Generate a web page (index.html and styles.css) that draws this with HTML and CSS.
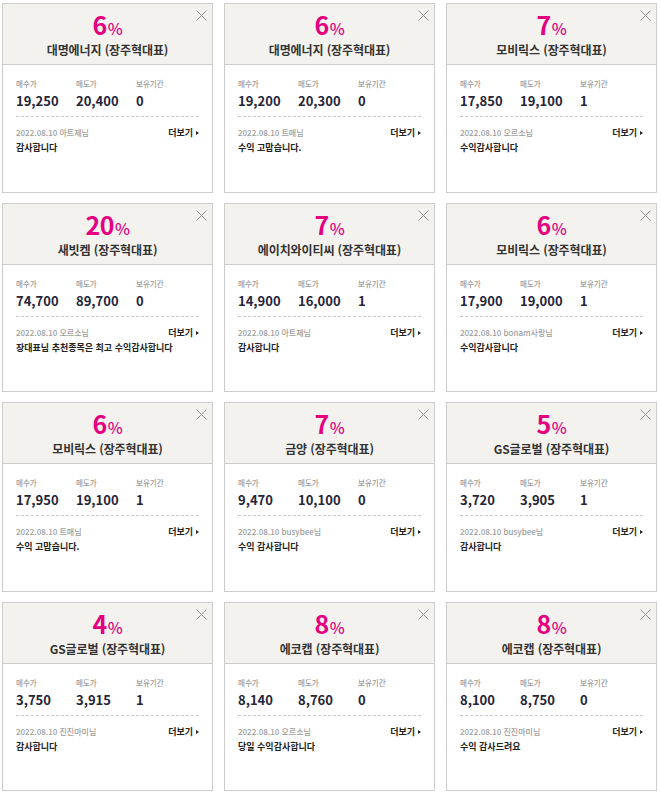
FILE: index.html
```html
<!DOCTYPE html>
<html lang="ko">
<head>
<meta charset="utf-8">
<title>수익 후기</title>
<link rel="stylesheet" href="styles.css">
</head>
<body>
<div class="grid">

<div class="card">
  <svg class="close" viewBox="0 0 11 11" width="11" height="11"><path d="M0.5 0.5L10.5 10.5M10.5 0.5L0.5 10.5"/></svg>
  <div class="head"><div class="rate">6<span class="pct">%</span></div><div class="name">대명에너지 (장주혁대표)</div></div>
  <div class="body">
    <div class="stats">
      <div class="stat"><div class="lbl">매수가</div><div class="val">19,250</div></div>
      <div class="stat"><div class="lbl">매도가</div><div class="val">20,400</div></div>
      <div class="stat"><div class="lbl">보유기간</div><div class="val">0</div></div>
    </div>
    <div class="meta"><span class="date">2022.08.10 아트제님</span><span class="more">더보기</span></div>
    <div class="comment">감사합니다</div>
  </div>
</div>

<div class="card">
  <svg class="close" viewBox="0 0 11 11" width="11" height="11"><path d="M0.5 0.5L10.5 10.5M10.5 0.5L0.5 10.5"/></svg>
  <div class="head"><div class="rate">6<span class="pct">%</span></div><div class="name">대명에너지 (장주혁대표)</div></div>
  <div class="body">
    <div class="stats">
      <div class="stat"><div class="lbl">매수가</div><div class="val">19,200</div></div>
      <div class="stat"><div class="lbl">매도가</div><div class="val">20,300</div></div>
      <div class="stat"><div class="lbl">보유기간</div><div class="val">0</div></div>
    </div>
    <div class="meta"><span class="date">2022.08.10 트매님</span><span class="more">더보기</span></div>
    <div class="comment">수익 고맙습니다.</div>
  </div>
</div>

<div class="card">
  <svg class="close" viewBox="0 0 11 11" width="11" height="11"><path d="M0.5 0.5L10.5 10.5M10.5 0.5L0.5 10.5"/></svg>
  <div class="head"><div class="rate">7<span class="pct">%</span></div><div class="name">모비릭스 (장주혁대표)</div></div>
  <div class="body">
    <div class="stats">
      <div class="stat"><div class="lbl">매수가</div><div class="val">17,850</div></div>
      <div class="stat"><div class="lbl">매도가</div><div class="val">19,100</div></div>
      <div class="stat"><div class="lbl">보유기간</div><div class="val">1</div></div>
    </div>
    <div class="meta"><span class="date">2022.08.10 오르소님</span><span class="more">더보기</span></div>
    <div class="comment">수익감사합니다</div>
  </div>
</div>

<div class="card">
  <svg class="close" viewBox="0 0 11 11" width="11" height="11"><path d="M0.5 0.5L10.5 10.5M10.5 0.5L0.5 10.5"/></svg>
  <div class="head"><div class="rate">20<span class="pct">%</span></div><div class="name">새빗켐 (장주혁대표)</div></div>
  <div class="body">
    <div class="stats">
      <div class="stat"><div class="lbl">매수가</div><div class="val">74,700</div></div>
      <div class="stat"><div class="lbl">매도가</div><div class="val">89,700</div></div>
      <div class="stat"><div class="lbl">보유기간</div><div class="val">0</div></div>
    </div>
    <div class="meta"><span class="date">2022.08.10 오르소님</span><span class="more">더보기</span></div>
    <div class="comment">장대표님 추천종목은 최고 수익감사합니다</div>
  </div>
</div>

<div class="card">
  <svg class="close" viewBox="0 0 11 11" width="11" height="11"><path d="M0.5 0.5L10.5 10.5M10.5 0.5L0.5 10.5"/></svg>
  <div class="head"><div class="rate">7<span class="pct">%</span></div><div class="name">에이치와이티씨 (장주혁대표)</div></div>
  <div class="body">
    <div class="stats">
      <div class="stat"><div class="lbl">매수가</div><div class="val">14,900</div></div>
      <div class="stat"><div class="lbl">매도가</div><div class="val">16,000</div></div>
      <div class="stat"><div class="lbl">보유기간</div><div class="val">1</div></div>
    </div>
    <div class="meta"><span class="date">2022.08.10 아트제님</span><span class="more">더보기</span></div>
    <div class="comment">감사합니다</div>
  </div>
</div>

<div class="card">
  <svg class="close" viewBox="0 0 11 11" width="11" height="11"><path d="M0.5 0.5L10.5 10.5M10.5 0.5L0.5 10.5"/></svg>
  <div class="head"><div class="rate">6<span class="pct">%</span></div><div class="name">모비릭스 (장주혁대표)</div></div>
  <div class="body">
    <div class="stats">
      <div class="stat"><div class="lbl">매수가</div><div class="val">17,900</div></div>
      <div class="stat"><div class="lbl">매도가</div><div class="val">19,000</div></div>
      <div class="stat"><div class="lbl">보유기간</div><div class="val">1</div></div>
    </div>
    <div class="meta"><span class="date">2022.08.10 bonam사랑님</span><span class="more">더보기</span></div>
    <div class="comment">수익감사합니다</div>
  </div>
</div>

<div class="card">
  <svg class="close" viewBox="0 0 11 11" width="11" height="11"><path d="M0.5 0.5L10.5 10.5M10.5 0.5L0.5 10.5"/></svg>
  <div class="head"><div class="rate">6<span class="pct">%</span></div><div class="name">모비릭스 (장주혁대표)</div></div>
  <div class="body">
    <div class="stats">
      <div class="stat"><div class="lbl">매수가</div><div class="val">17,950</div></div>
      <div class="stat"><div class="lbl">매도가</div><div class="val">19,100</div></div>
      <div class="stat"><div class="lbl">보유기간</div><div class="val">1</div></div>
    </div>
    <div class="meta"><span class="date">2022.08.10 트매님</span><span class="more">더보기</span></div>
    <div class="comment">수익 고맙습니다.</div>
  </div>
</div>

<div class="card">
  <svg class="close" viewBox="0 0 11 11" width="11" height="11"><path d="M0.5 0.5L10.5 10.5M10.5 0.5L0.5 10.5"/></svg>
  <div class="head"><div class="rate">7<span class="pct">%</span></div><div class="name">금양 (장주혁대표)</div></div>
  <div class="body">
    <div class="stats">
      <div class="stat"><div class="lbl">매수가</div><div class="val">9,470</div></div>
      <div class="stat"><div class="lbl">매도가</div><div class="val">10,100</div></div>
      <div class="stat"><div class="lbl">보유기간</div><div class="val">0</div></div>
    </div>
    <div class="meta"><span class="date">2022.08.10 busybee님</span><span class="more">더보기</span></div>
    <div class="comment">수익 감사합니다</div>
  </div>
</div>

<div class="card">
  <svg class="close" viewBox="0 0 11 11" width="11" height="11"><path d="M0.5 0.5L10.5 10.5M10.5 0.5L0.5 10.5"/></svg>
  <div class="head"><div class="rate">5<span class="pct">%</span></div><div class="name">GS글로벌 (장주혁대표)</div></div>
  <div class="body">
    <div class="stats">
      <div class="stat"><div class="lbl">매수가</div><div class="val">3,720</div></div>
      <div class="stat"><div class="lbl">매도가</div><div class="val">3,905</div></div>
      <div class="stat"><div class="lbl">보유기간</div><div class="val">1</div></div>
    </div>
    <div class="meta"><span class="date">2022.08.10 busybee님</span><span class="more">더보기</span></div>
    <div class="comment">감사합니다</div>
  </div>
</div>

<div class="card">
  <svg class="close" viewBox="0 0 11 11" width="11" height="11"><path d="M0.5 0.5L10.5 10.5M10.5 0.5L0.5 10.5"/></svg>
  <div class="head"><div class="rate">4<span class="pct">%</span></div><div class="name">GS글로벌 (장주혁대표)</div></div>
  <div class="body">
    <div class="stats">
      <div class="stat"><div class="lbl">매수가</div><div class="val">3,750</div></div>
      <div class="stat"><div class="lbl">매도가</div><div class="val">3,915</div></div>
      <div class="stat"><div class="lbl">보유기간</div><div class="val">1</div></div>
    </div>
    <div class="meta"><span class="date">2022.08.10 진진마미님</span><span class="more">더보기</span></div>
    <div class="comment">감사합니다</div>
  </div>
</div>

<div class="card">
  <svg class="close" viewBox="0 0 11 11" width="11" height="11"><path d="M0.5 0.5L10.5 10.5M10.5 0.5L0.5 10.5"/></svg>
  <div class="head"><div class="rate">8<span class="pct">%</span></div><div class="name">에코캡 (장주혁대표)</div></div>
  <div class="body">
    <div class="stats">
      <div class="stat"><div class="lbl">매수가</div><div class="val">8,140</div></div>
      <div class="stat"><div class="lbl">매도가</div><div class="val">8,760</div></div>
      <div class="stat"><div class="lbl">보유기간</div><div class="val">0</div></div>
    </div>
    <div class="meta"><span class="date">2022.08.10 오르소님</span><span class="more">더보기</span></div>
    <div class="comment">당일 수익감사합니다</div>
  </div>
</div>

<div class="card">
  <svg class="close" viewBox="0 0 11 11" width="11" height="11"><path d="M0.5 0.5L10.5 10.5M10.5 0.5L0.5 10.5"/></svg>
  <div class="head"><div class="rate">8<span class="pct">%</span></div><div class="name">에코캡 (장주혁대표)</div></div>
  <div class="body">
    <div class="stats">
      <div class="stat"><div class="lbl">매수가</div><div class="val">8,100</div></div>
      <div class="stat"><div class="lbl">매도가</div><div class="val">8,750</div></div>
      <div class="stat"><div class="lbl">보유기간</div><div class="val">0</div></div>
    </div>
    <div class="meta"><span class="date">2022.08.10 진진마미님</span><span class="more">더보기</span></div>
    <div class="comment">수익 감사드려요</div>
  </div>
</div>

</div>
</body>
</html>
```

FILE: styles.css
```css
html, body {
  margin: 0;
  padding: 0;
  background: #ffffff;
}

body {
  font-family: "Noto Sans CJK KR", "Noto Sans", sans-serif;
  color: #222222;
}

.grid {
  display: grid;
  grid-template-columns: repeat(3, 211px);
  grid-auto-rows: 189.5px;
  column-gap: 11px;
  row-gap: 10px;
  padding: 3px 0 0 2px;
}

.card {
  position: relative;
  box-sizing: border-box;
  border: 1px solid #cccccc;
  background: #ffffff;
  display: flex;
  flex-direction: column;
}

.close {
  position: absolute;
  top: 6px;
  right: 5px;
  fill: none;
  stroke: #909090;
  stroke-width: 1;
}

.head {
  box-sizing: border-box;
  height: 61px;
  flex-shrink: 0;
  background: #f4f2ef;
  border-bottom: 1px solid #cccccc;
  display: flex;
  flex-direction: column;
  align-items: center;
  padding-top: 7px;
}

.rate {
  font-size: 25px;
  line-height: 26px;
  font-weight: 700;
  color: #e4007f;
  letter-spacing: -0.5px;
}

.pct {
  font-size: 16px;
  font-weight: 500;
  margin-left: 1px;
}

.name {
  margin-top: 2px;
  font-size: 12px;
  line-height: 14px;
  font-weight: 700;
  color: #333333;
  letter-spacing: -0.1px;
}

.body {
  padding: 14px 13px 0 13px;
}

.stats {
  display: flex;
  padding-bottom: 7px;
  border-bottom: 1px dashed #cccccc;
}

.stat {
  width: 60px;
}

.lbl {
  font-size: 7.5px;
  line-height: 10px;
  font-weight: 500;
  color: #999999;
}

.val {
  margin-top: 4px;
  font-size: 13px;
  line-height: 16px;
  font-weight: 700;
  color: #25253a;
}

.meta {
  display: flex;
  justify-content: space-between;
  align-items: center;
  margin-top: 10px;
  line-height: 12px;
}

.date {
  font-size: 8px;
  font-weight: 500;
  color: #9d9d9d;
}

.more {
  font-size: 9px;
  font-weight: 700;
  color: #222222;
  display: flex;
  align-items: center;
}

.more::after {
  content: "";
  margin-left: 3px;
  border-left: 3px solid #222222;
  border-top: 2.5px solid transparent;
  border-bottom: 2.5px solid transparent;
}

.comment {
  margin-top: 3px;
  font-size: 9px;
  line-height: 12px;
  font-weight: 700;
  color: #222222;
}
```
